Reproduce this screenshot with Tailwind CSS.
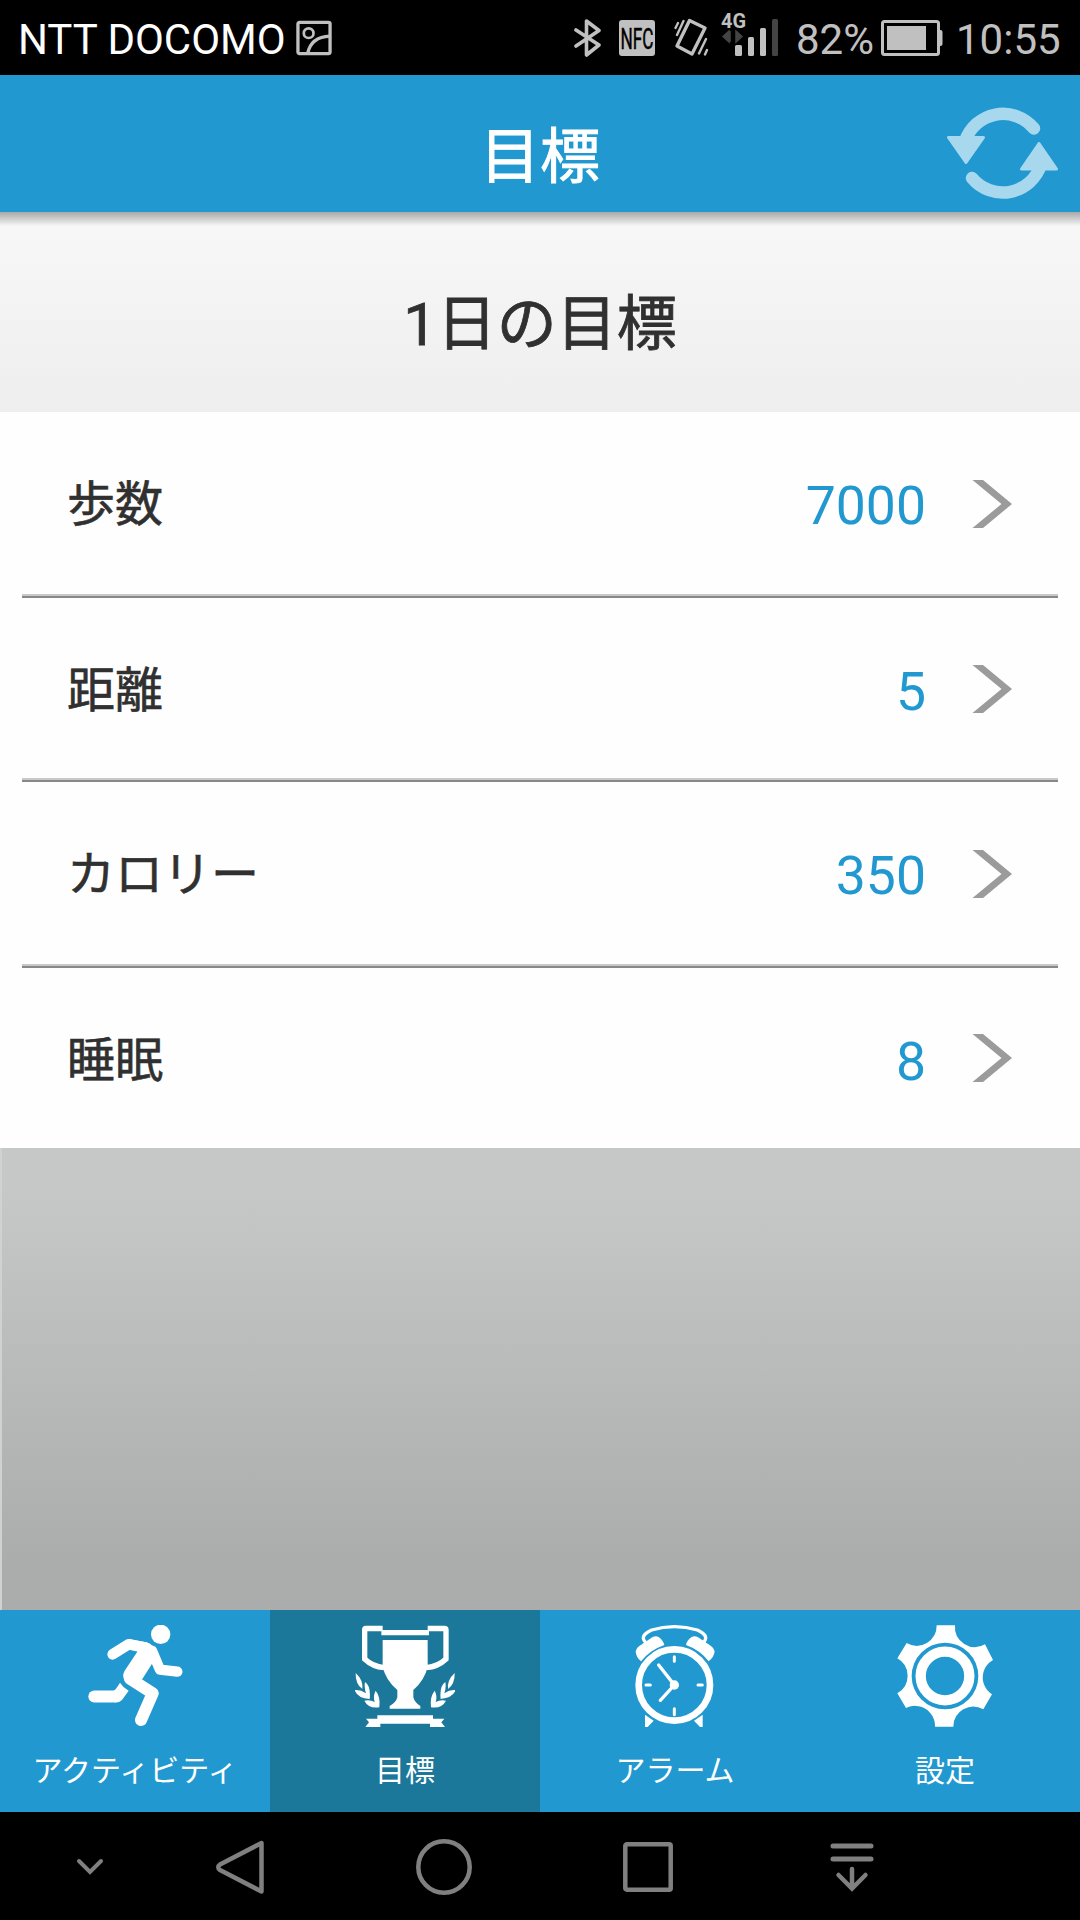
<!DOCTYPE html>
<html lang="ja">
<head>
    <meta charset="UTF-8">
    <meta name="viewport" content="width=device-width,initial-scale=1">
    <title>目標</title>
    <script src="https://cdn.jsdelivr.net/npm/@tailwindcss/browser@4"></script>
</head>
<body class="w-[1080px] h-[1920px] overflow-hidden bg-black flex flex-col font-['Roboto','Noto_Sans_CJK_JP',sans-serif]">

    <!-- ステータスバー -->
    <div class="h-[75px] shrink-0 flex items-center pl-[18px] pr-[19px] text-[#c0c0c0] text-[42px] leading-none whitespace-nowrap">
        <span class="w-[278px] text-white pt-[4px]">NTT DOCOMO</span>
        <svg class="w-[36px] h-[36px]" viewBox="0 0 37 36" fill="none" stroke="#c0c0c0" stroke-width="3.4">
            <rect x="2" y="2" width="33" height="32" rx="1.5"/>
            <circle cx="13" cy="13" r="5" stroke-width="2.8"/>
            <path d="M12 34C14 23 22 16.500 35 16"/>
        </svg>

        <div class="ml-auto flex items-center">
            <svg class="w-[28px] h-[38px]" viewBox="0 0 28 38" fill="none" stroke="#c0c0c0" stroke-width="3.6" stroke-linejoin="round" stroke-linecap="round">
                <path d="M2 11L25 26L12.500 36V2L25 11.500L2 27"/>
            </svg>
            <svg class="w-[36px] h-[36px] ml-[17px] overflow-visible" viewBox="0 0 36 36">
                <rect width="36" height="36" rx="3" fill="#c0c0c0"/>
                <text x="1.500" y="28.500" font-family="Roboto" font-size="29" textLength="33" lengthAdjust="spacingAndGlyphs" fill="#000" stroke="#000" stroke-width=".5">NFC</text>
            </svg>
            <svg class="w-[35px] h-[39px] ml-[19px]" viewBox="0 0 35 39" fill="none" stroke="#c0c0c0" stroke-linecap="round">
                <path d="M15.500 2.500L31 10L18 36L3 28Z" stroke-width="3.4" stroke-linejoin="round"/>
                <path d="M4 5L1.500 10M9.500 3L3 17M32 21L25 35.500M33 32L31 36.500" stroke-width="2.4"/>
            </svg>
            <svg class="w-[58px] h-[46px] ml-[12px] mb-[7px] overflow-visible" viewBox="0 0 58 46">
                <text x="0" y="17" font-family="Roboto" font-size="20" font-weight="700" textLength="25" lengthAdjust="spacingAndGlyphs" fill="#c0c0c0">4G</text>
                <path d="M9 20V31M8 20L2 25.500L8 31ZM15 20V31M15 20L21 25.500L15 31Z" fill="#444" stroke="#444" stroke-width="1.500"/>
                <rect x="14" y="34" width="7" height="11" rx="1.500" fill="#c0c0c0"/>
                <rect x="27" y="26" width="6" height="19" rx="1.500" fill="#c0c0c0"/>
                <rect x="39" y="17" width="6" height="28" rx="1.500" fill="#c0c0c0"/>
                <rect x="51" y="8" width="6" height="37" rx="1.500" fill="#444"/>
            </svg>
            <span class="ml-[17px] w-[85px] pt-[4px]">82%</span>
            <svg class="w-[62px] h-[36px]" viewBox="0 0 62 36">
                <rect x="1.500" y="1.500" width="56" height="33" rx="2" fill="none" stroke="#c0c0c0" stroke-width="3"/>
                <rect x="6" y="6" width="39" height="24" fill="#c0c0c0"/>
                <path d="M58 10h1.500q2 0 2 2v12q0 2-2 2H58Z" fill="#c0c0c0"/>
            </svg>
            <span class="ml-[13px] w-[105px] pt-[4px]">10:55</span>
        </div>
    </div>

    <!-- ヘッダー -->
    <header class="h-[137px] shrink-0 bg-[#2199d0] grid grid-cols-[1fr_auto_1fr] items-center">
        <h1 class="col-start-2 text-white text-[60px] leading-[60px] pt-[28px] [-webkit-text-stroke:0.9px_#fff]">目標</h1>
        <svg class="justify-self-end mr-[22px] mt-[19px] w-[111px] h-[94px]" viewBox="947 106.500 111 94" fill="#a8d8ee">
            <g fill="none" stroke="#a8d8ee" stroke-width="12.500" stroke-linecap="round">
                <path d="M1034 129A40 40 0 0 0 965 142"/>
                <path d="M972 178.500A40 40 0 0 0 1041 165"/>
            </g>
            <g stroke="#a8d8ee" stroke-width="3" stroke-linejoin="round">
                <path d="M948.500 138H983.500L966 163Z"/>
                <path d="M1021.500 169.500H1056.500L1039 144Z"/>
            </g>
        </svg>
    </header>

    <!-- 見出し -->
    <section class="h-[200px] shrink-0 bg-linear-to-b from-[#f8f8f8] to-[#eeeeee]">
        <div class="h-[14px] bg-linear-to-b from-[#a8a8a8] to-[#f7f7f7]"></div>
        <h2 class="pt-[69px] text-center text-[60px] leading-[60px] text-[#303030] [-webkit-text-stroke:0.8px_#303030]">1日の目標</h2>
    </section>

    <!-- 目標リスト -->
    <ul class="h-[736px] shrink-0 bg-[#fefefe] px-[22px] text-[#303030]">
        <li class="h-[186px] flex items-center pl-[45px] pr-[45px] border-b-2 border-[#888] shadow-[inset_0_-2px_0_#c8c8c8]">
            <span class="pt-[2px] text-[48px] leading-[60px] [-webkit-text-stroke:0.6px_#303030]">歩数</span>
            <span class="ml-auto mr-[45px] pt-[4px] text-[53.5px] leading-[60px] text-[#2199d0]">7000</span>
            <svg class="w-[42px] h-[48px]" viewBox="0 0 42 48"><path d="M1.500 0H12L41 24L12 48H1.500L30.500 24Z" fill="#9b9b9b"/></svg>
        </li>
        <li class="h-[184px] flex items-center pl-[45px] pr-[45px] border-b-2 border-[#888] shadow-[inset_0_-2px_0_#c8c8c8]">
            <span class="pt-[4px] text-[48px] leading-[60px] [-webkit-text-stroke:0.6px_#303030]">距離</span>
            <span class="ml-auto mr-[45px] pt-[5px] text-[53.5px] leading-[60px] text-[#2199d0]">5</span>
            <svg class="w-[42px] h-[48px]" viewBox="0 0 42 48"><path d="M1.500 0H12L41 24L12 48H1.500L30.500 24Z" fill="#9b9b9b"/></svg>
        </li>
        <li class="h-[186px] flex items-center pl-[45px] pr-[45px] border-b-2 border-[#888] shadow-[inset_0_-2px_0_#c8c8c8]">
            <span class="pt-[2px] text-[48px] leading-[60px] [-webkit-text-stroke:0.6px_#303030]">カロリー</span>
            <span class="ml-auto mr-[45px] pt-[4px] text-[53.5px] leading-[60px] text-[#2199d0]">350</span>
            <svg class="w-[42px] h-[48px]" viewBox="0 0 42 48"><path d="M1.500 0H12L41 24L12 48H1.500L30.500 24Z" fill="#9b9b9b"/></svg>
        </li>
        <li class="h-[180px] flex items-center pl-[45px] pr-[45px]">
            <span class="pt-[5px] text-[48px] leading-[60px] [-webkit-text-stroke:0.6px_#303030]">睡眠</span>
            <span class="ml-auto mr-[45px] pt-[7px] text-[53.5px] leading-[60px] text-[#2199d0]">8</span>
            <svg class="w-[42px] h-[48px]" viewBox="0 0 42 48"><path d="M1.500 0H12L41 24L12 48H1.500L30.500 24Z" fill="#9b9b9b"/></svg>
        </li>
    </ul>

    <div class="h-[462px] shrink-0 bg-linear-to-b from-[#c6c8c7] from-10% to-[#abadac] to-90% border-l-2 border-[#d0d2d1]"></div>

    <!-- タブバー -->
    <nav class="h-[202px] shrink-0 grid grid-cols-4 bg-[#2199d0] text-white text-[30px] leading-[40px] text-center">
        <div class="pt-[15px] flex flex-col items-center gap-[24px]">
            <svg class="w-[100px] h-[102px]" viewBox="255 75 300 306" fill="#fff">
                <circle cx="482" cy="103" r="29"/>
                <path d="M385 117L440 127Q465 137 476 162L457 190L427 237L400 262L376 244Q364 230 374 212L412 155Z"/>
                <g fill="none" stroke="#fff" stroke-linecap="round" stroke-linejoin="round">
                    <path d="M338 163L386 133L440 144" stroke-width="32"/>
                    <path d="M456 152L480 209L532 215" stroke-width="31"/>
                    <path d="M390 236L458 280L423 360" stroke-width="36"/>
                    <path d="M283 289.500H345" stroke-width="36"/>
                </g>
                <path d="M340 273Q346 271 360 248Q370 264 386 272L366 300Q358 308 345 307.500Z"/>
            </svg>
            <span>アクティビティ</span>
        </div>
        <div class="pt-[15px] flex flex-col items-center gap-[24px] bg-[#1c789b]">
            <svg class="w-[100px] h-[102px]" viewBox="255 75 300 306" fill="#fff">
                <path d="M338 85.500H288Q284 85.500 284 90V177Q308 200 342 203M473 85.500H523Q528 85.500 528 90V177Q504 200 469 203" fill="none" stroke="#fff" stroke-width="16"/>
                <path d="M334 90H477V106H334Z"/>
                <path d="M338 120H473V200Q464 240 430 270V292Q434 308 451 318V326H359V318Q378 308 382 292V270Q347 240 338 200Z"/>
                <path d="M322 346H489V356H523L514 367L525 381H480V371H331V381H286L297 367L288 356H322Z"/>
                <g id="laurel">
                    <path d="M257 219Q280 240 277 267Q256 252 257 219Z"/>
                    <path d="M285 246Q303 258 299 297Q262 294 254 270Q272 268 288 280Q282 262 285 246Z"/>
                    <path d="M317 272Q332 290 328 322Q296 327 283 302Q300 298 314 306Q308 288 317 272Z"/>
                </g>
                <use href="#laurel" transform="translate(811 0) scale(-1 1)"/>
            </svg>
            <span>目標</span>
        </div>
        <div class="pt-[15px] flex flex-col items-center gap-[24px]">
            <svg class="w-[100px] h-[102px]" viewBox="255 75 300 306" fill="#fff">
                <g fill="none" stroke="#fff" stroke-linecap="round">
                    <circle cx="403" cy="255" r="107" stroke-width="20"/>
                    <path d="M314 124Q300 106 335 90Q403 70 472 90Q507 106 493 124" stroke-width="10"/>
                    <path d="M356 195L403 255L361 301" stroke-width="10"/>
                    <path d="M403 170V184M403 326V344M318 255H331M474 255H487" stroke-width="9"/>
                </g>
                <circle cx="403" cy="255" r="14"/>
                <path d="M303 184Q288 172 287 154Q288 144 298 138L338 111Q348 106 356 111Q370 122 373 135Q330 150 303 184Z"/>
                <path d="M506 184Q522 172 524 154Q522 144 513 138L473 111Q463 106 455 111Q440 122 438 135Q480 150 506 184Z"/>
                <path d="M315 344L341 362L323 381H315ZM488 344L462 362L480 381H488Z"/>
            </svg>
            <span>アラーム</span>
        </div>
        <div class="pt-[15px] flex flex-col items-center gap-[24px]">
            <svg class="w-[100px] h-[102px]" viewBox="255 75 300 306" fill="#fff">
                <path fill-rule="evenodd" d="M380 76H435A60 60 0 0 0 525 133L549 180A60 60 0 0 0 546 283L520 328A60 60 0 0 0 430 380H375A60 60 0 0 0 288 324L262 280A60 60 0 0 0 262 175L290 129A60 60 0 0 0 380 76ZM405 128A100 100 0 0 0 405 328A100 100 0 0 0 405 128Z"/>
                <circle cx="405" cy="228" r="73" fill="none" stroke="#fff" stroke-width="31"/>
            </svg>
            <span>設定</span>
        </div>
    </nav>

    <!-- ナビゲーションキー -->
    <div class="h-[108px] shrink-0 flex items-center pl-[76px] pt-[2px]">
        <svg class="w-[28px] h-[18px]" viewBox="0 0 28 18" fill="none" stroke="#808080" stroke-width="4" stroke-linecap="round"><path d="M3 3L14 14L25 3"/></svg>
        <svg class="w-[50px] h-[56px] ml-[111px]" viewBox="0 0 50 56" fill="none" stroke="#808080" stroke-width="4.500" stroke-linejoin="round"><path d="M46.500 4V52.500L5 31Q1.500 28 5 25.500Z"/></svg>
        <svg class="w-[56px] h-[56px] ml-[151px]" viewBox="0 0 56 56" fill="none" stroke="#808080" stroke-width="4.500"><circle cx="28" cy="28" r="25.700"/></svg>
        <svg class="w-[50px] h-[50px] ml-[151px]" viewBox="0 0 50 50" fill="none" stroke="#808080" stroke-width="4.500"><rect x="2.300" y="2.300" width="45.400" height="45.400" rx="1.500"/></svg>
        <svg class="w-[44px] h-[50px] ml-[157px]" viewBox="0 0 44 50" fill="none" stroke="#808080" stroke-width="4.500" stroke-linecap="round">
            <path d="M3 4H41M3 17H41" stroke-width="5"/>
            <path d="M22 27V46M8.500 33L22 46.500L35.500 33"/>
        </svg>
    </div>
</body>
</html>
